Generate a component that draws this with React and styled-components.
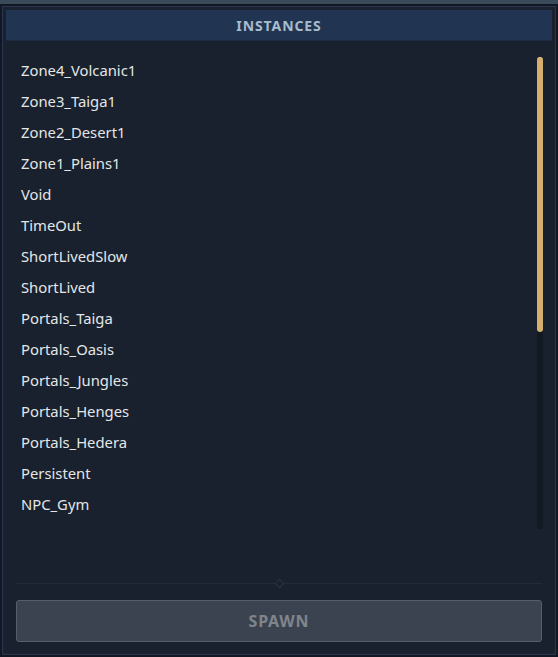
import React from "react";
import styled, { createGlobalStyle } from "styled-components";

const Global = createGlobalStyle`
  html, body { margin: 0; padding: 0; }
  body {
    background: #3a4a5a;
    font-family: "Noto Sans", "DejaVu Sans", sans-serif;
    width: 558px;
    height: 657px;
    overflow: hidden;
  }
`;

const Panel = styled.div`
  box-sizing: border-box;
  margin-top: 4px;
  height: 653px;
  width: 558px;
  background: #18212d;
  border: 2px solid #111823;
  box-shadow: inset 0 0 0 1px #2a3650, inset 0 0 0 3px #1a2230;
  display: flex;
  flex-direction: column;
  padding: 4px 4px 13px 4px;
`;

const Header = styled.div`
  height: 30px;
  background: #213552;
  border-bottom: 1px solid #1b2a40;
  display: flex;
  align-items: center;
  justify-content: center;
  color: #a8bccd;
  font-weight: 700;
  font-size: 14px;
  letter-spacing: 0.9px;
  font-family: "Noto Sans", sans-serif;
`;

const Body = styled.div`
  flex: 1;
  display: flex;
  padding: 14px 9px 0 10px;
  min-height: 0;
`;

const List = styled.ul`
  list-style: none;
  margin: 0;
  padding: 0;
  flex: 1;
`;

const Item = styled.li`
  height: 31px;
  line-height: 31px;
  color: #e4e6e8;
  font-size: 14.8px;
  padding-left: 5px;
`;

const Track = styled.div`
  width: 6px;
  height: 472px;
  background: #121923;
  border-radius: 3px;
  margin-top: 2px;
  display: flex;
  flex-direction: column;
`;

const Thumb = styled.div`
  width: 6px;
  background: #d5af6c;
  border-radius: 3px;
  border-top: 1px solid #e8c98e;
  box-sizing: border-box;
`;

const Footer = styled.div`
  display: flex;
  flex-direction: column;
  padding: 0 10px;
`;

const Divider = styled.div`
  height: 1px;
  background: #222c38;
  position: relative;
  margin-bottom: 16px;
`;

const Diamond = styled.div`
  position: absolute;
  left: 50%;
  top: -3px;
  width: 5px;
  height: 5px;
  margin-left: -3px;
  transform: rotate(45deg);
  border: 1px solid #2a3440;
  background: #18212d;
`;

const SpawnButton = styled.button`
  height: 42px;
  background: #3b4350;
  border: 1px solid #555f6b;
  border-radius: 3px;
  color: #80858c;
  font-family: "Noto Sans", sans-serif;
  font-weight: 700;
  font-size: 16px;
  letter-spacing: 0.8px;
  cursor: default;
`;

const items = [
  "Zone4_Volcanic1",
  "Zone3_Taiga1",
  "Zone2_Desert1",
  "Zone1_Plains1",
  "Void",
  "TimeOut",
  "ShortLivedSlow",
  "ShortLived",
  "Portals_Taiga",
  "Portals_Oasis",
  "Portals_Jungles",
  "Portals_Henges",
  "Portals_Hedera",
  "Persistent",
  "NPC_Gym",
];

export default function App() {
  const thumbRatio = 0.583;
  return (
    <>
      <Global />
      <Panel>
        <Header>INSTANCES</Header>
        <Body>
          <List>
            {items.map((it) => (
              <Item key={it}>{it}</Item>
            ))}
          </List>
          <Track>
            <Thumb style={{ height: `${thumbRatio * 100}%` }} />
          </Track>
        </Body>
        <Footer>
          <Divider>
            <Diamond />
          </Divider>
          <SpawnButton>SPAWN</SpawnButton>
        </Footer>
      </Panel>
    </>
  );
}
